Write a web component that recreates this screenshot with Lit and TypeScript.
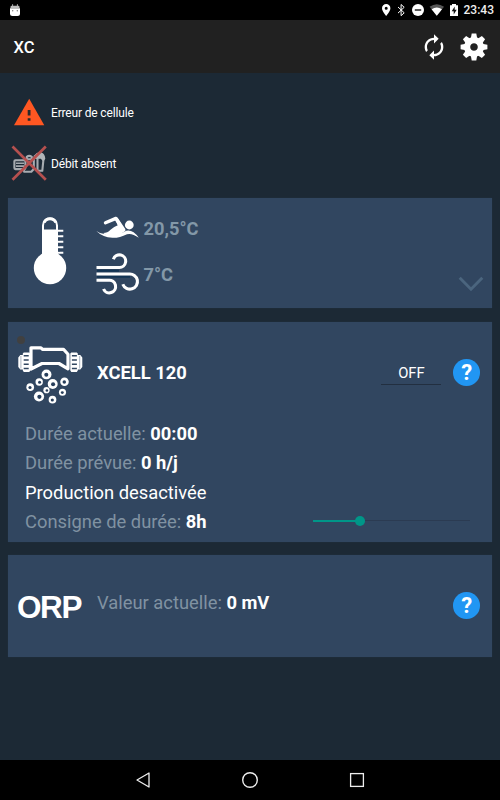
import { LitElement, html, svg, css, TemplateResult } from "lit";
import { customElement, property } from "lit/decorators.js";

const icon = (box: string, body: TemplateResult, cls = "") => {
  const [, , w, h] = box.split(" ");
  return html`<svg class=${cls} viewBox=${box} width=${w} height=${h} aria-hidden="true">${body}</svg>`;
};

const android = icon("9 2 12 14", svg`
  <path d="M12.6 3.2v3M17.4 3.2v3" stroke="#aaa" stroke-width="1"/>
  <path d="M10.5 6q0-1.3 1.3-1.3h6.4q1.3 0 1.3 1.3v1h-9z" fill="#bbb"/>
  <path d="M10 7.2h10v5.3q0 2.5-2.5 2.5h-5q-2.5 0-2.5-2.5z" fill="#fff"/>
  <circle cx="12.7" cy="9.7" r=".7" fill="#777"/><circle cx="17.3" cy="9.7" r=".7" fill="#777"/>`);

const indicators = icon("380 2 80 16", svg`
  <path fill="#fff" fill-rule="evenodd" d="M386.2 4a4.2 4.2 0 0 0-4.2 4.2c0 3 4.2 7.8 4.2 7.8s4.2-4.8 4.2-7.8A4.2 4.2 0 0 0 386.2 4zm0 2.7a1.5 1.5 0 1 1 0 3 1.5 1.5 0 0 1 0-3z"/>
  <path fill="none" stroke="#fff" stroke-width="1" d="M398 7l6.2 5.8-3.1 2.9V4.5l3.1 2.8-6.2 5.8"/>
  <circle cx="418" cy="10" r="6" fill="#fff"/><path d="M414.8 10h6.4" stroke="#222" stroke-width="1.5"/>
  <path fill="#565656" d="M436.8 15.8L429.6 6.8q7.2-5 14.4 0z"/>
  <path fill="#fff" d="M436.8 15.8L431.6 9.2q5.2-3.4 10.4 0z"/>
  <path fill="#fff" d="M450 5.2h2V4h4v1.2h2V16h-8z"/>
  <path fill="#111" d="M454.7 6.6l-3 4.6h2v3.4l3-4.8h-2z"/>`);

const refresh = svg`<path fill="#fff" d="M12 6v3l4-4-4-4v3c-4.42 0-8 3.58-8 8 0 1.57.46 3.03 1.24 4.26L6.7 14.8c-.45-.83-.7-1.79-.7-2.8 0-3.31 2.69-6 6-6zm6.76 1.74L17.3 9.2c.44.84.7 1.79.7 2.8 0 3.31-2.69 6-6 6v-3l-4 4 4 4v-3c4.42 0 8-3.58 8-8 0-1.57-.46-3.03-1.24-4.26z"/>`;

const gear = html`<svg viewBox="-14 -14 28 28" width="28" height="28" aria-hidden="true">
  ${[0, 45, 90, 135, 180, 225, 270, 315].map((a) => svg`<path fill="#fff" transform="rotate(${a})" d="M-3.3 -8L-2.3 -13.4H2.3L3.3 -8z"/>`)}
  <circle r="6.9" fill="none" stroke="#fff" stroke-width="6.2"/></svg>`;

const warning = icon("11 96 36 33", svg`
  <path fill="#ff5722" d="M29.2 98.8L44.3 125.2H14z"/>
  <path stroke="#2a2a2c" stroke-width="2.8" d="M29.1 110v5.6M29.1 118.2v2.6"/>`);

const noFlow = icon("11 145 36 39", svg`
  <g fill="none" stroke="#a6abb0" stroke-width="2.100" stroke-linejoin="round">
    <rect x="14.400" y="161.300" width="11" height="8.800" rx="1"/>
    <path d="M16 164.300h8M16 167.100h8" stroke-width="1.600"/>
    <path d="M25 160.200h8.800v9.800l-2.500 2.800h-7l-1-2.800M26.800 159.500v-1.600q2.400-2 5 0v1.600"/>
    <path d="M33.500 158.500h4v13.300h4.800l1.200-12"/>
  </g>
  <path fill="#b1b5b9" d="M33.500 157l2-1.700q1-1.800 3-1.800h2.800q3.500.8 4 6.200l-2 2.800-2.500-2.800h-5.500z"/>
  <path fill="none" stroke="#b5504f" stroke-width="2.700" d="M12.500 147.500L45.800 180.700M45.800 147.500L12.500 180.700"/>`);

const thermometer = icon("33 215 34 70", svg`
  <path fill="none" stroke="#fff" stroke-width="2" d="M43 232v-6.500a7 7 0 0 1 14 0v6.500"/>
  <path fill="none" stroke="#fff" stroke-width="3" d="M44.200 222.500q1.500-3.800 5.800-3.800t5.800 3.800"/>
  <path fill="#fff" d="M42 229.500h16v27H42z"/>
  <circle cx="50" cy="268" r="16.200" fill="#fff"/>
  <path stroke="#fff" stroke-width="2" d="M57 230.700h6.300M57 236.200h6.300M57 241.700h6.300M57 247.200h6.300M57 252.700h6.300"/>
  <path stroke="#314660" stroke-width="1" d="M59.100 232v3.200M59.100 237.500v3.200M59.100 243v3.200M59.100 248.500v3.200"/>`);

const swimmer = icon("96 213 43 28", svg`
  <circle cx="129.300" cy="225" r="4.400" fill="#fff"/>
  <path fill="none" stroke="#fff" stroke-width="3.400" stroke-linecap="round" stroke-linejoin="round" d="M105.500 222.800l10.400-4.400 3.500 6"/>
  <path fill="#fff" d="M117.500 217.500L125.300 229q.8 2-1.200 2.800-9 5.800-16.600 4.400l-4.200-3.200q4.200 0 7.200-3.200 2.700-2.700 7.300-4.500l-2-5z"/>
  <path fill="#fff" d="M96.300 231q6.200 4.600 13 2.800 3-1.300 8-1.200 6 .4 9-1.800 6.500-1.500 12.500 7-6.800-5-11.800-3.600-7.500 3.800-14.500 3.600-10-.6-16.200-6.800z"/>`);

const wind = icon("96 253 43 42", svg`
  <path fill="none" stroke="#123454" stroke-width="2" d="M97 270.800h22M97 276.800h33"/>
  <g fill="none" stroke="#fff" stroke-width="3.100">
    <path d="M96.500 267.500h22.500a6.300 6.300 0 1 0-5.600-8.300"/>
    <path d="M96.500 274h32.500a7.600 7.600 0 1 1-6.200 10.300"/>
    <path d="M96.500 280.300h12a6.300 6.300 0 1 1-5 8.700"/>
  </g>`);

const bubbles: [number, number, number][] = [
  [46.5, 373.4, 3.5], [39.200, 381, 2.600], [64.500, 380.700, 3], [52.700, 383, 3.500], [30.200, 386.200, 2.700],
  [46.500, 389.200, 2.200], [62.500, 391.300, 2.500], [39, 395.500, 3.600], [52.500, 398.700, 2.700],
];

const collar = svg`
  <path fill="#fff" d="M18.300 356.500l2-2.500h2.500v-1.500l1-1h5.500l1 1v17l-1 1.500h-5.500l-1-1.500v-1h-2.500l-2-2.500z"/>
  <path stroke="#314660" stroke-width="1.500" d="M23.700 354.800h5M23.700 359h5M23.700 363.200h5M23.700 367.400h5"/>
  <path stroke="#8494a6" stroke-width=".7" d="M20.900 355v12.500"/>`;

const cell = icon("16 333 68 72", svg`
  <circle cx="21" cy="339" r="4" fill="#404040"/>
  <path fill="none" stroke="#fff" stroke-width="3.200" stroke-linejoin="round" d="M31 346.800h10l1.500 1.500h21l4.500 5v14.500l-9-5.300H42L31 368z"/>
  ${collar}<g transform="translate(100.600 0) scale(-1 1)">${collar}</g>
  ${bubbles.map(([x, y, r], i) => svg`<circle cx=${x} cy=${y} r=${r + r * 0.42} fill="#fff"/><circle cx=${x + (i % 2 ? 0.4 : -0.2)} cy=${y + 0.3} r=${r * 0.58} fill="#273e5b"/>`)}`);

const chevron = icon("458 275 26 18", svg`<path fill="none" stroke="#4b657e" stroke-width="2.900" d="M459.700 277.800L471 289.200l11.300-11.400"/>`);

@customElement("help-badge")
class HelpBadge extends LitElement {
  static styles = css`
    :host { display: flex; width: 26.6px; height: 26.6px; border-radius: 50%; background: #2196f3;
      align-items: center; justify-content: center; color: #fff; font: 700 22px/26px Roboto, sans-serif; }
    span { margin-top: 1px; }
  `;
  render() { return html`<span>?</span>`; }
}

@customElement("value-line")
class ValueLine extends LitElement {
  @property() label = "";
  @property() value = "";
  static styles = css`
    :host { display: block; color: #8092a2; white-space: nowrap; }
    b { color: #fff; font-weight: 700; }
  `;
  render() { return html`${this.label} <b>${this.value}</b>`; }
}

@customElement("app-root")
class AppRoot extends LitElement {
  static styles = css`
    :host { display: flex; flex-direction: column; width: 500px; height: 800px; overflow: hidden;
      background: #1c2935; color: #fff; font-family: Roboto, "Liberation Sans", sans-serif; }
    svg { display: block; flex: none; overflow: visible; }
    .status { height: 20px; background: #000; display: flex; align-items: center; padding: 0 6px 0 9px; flex: none; }
    .status .clock { font: 500 12px/20px Roboto, sans-serif; color: #eee; margin-left: 4px; }
    .grow { flex: 1; }
    .bar { height: 53px; box-sizing: border-box; background: #212121; display: flex; align-items: center; padding: 0 12.500px 0 13.500px; flex: none; }
    .bar h1 { font: 500 16.500px/20px Roboto, sans-serif; margin: 2px 0 0; flex: 1; }
    .bar .tools { display: flex; align-items: center; gap: 12px; }
    main { flex: 1; padding: 13.500px 8px 0; min-height: 0; }
    .alert { height: 51.5px; display: flex; align-items: center; padding-left: 3px; gap: 4px; font-size: 12px; letter-spacing: -.16px; }
    .alert span { margin-top: 1px; }
    .card { background: #314660; box-shadow: 0 0 1px #263648; box-sizing: border-box; }
    .temps { margin-top: 8.500px; height: 110px; display: flex; padding: 17px 8px 0 25px; }
    .temps .rows { margin: -2px 0 0 29px; flex: 1; display: flex; flex-direction: column; gap: 12px; }
    .temps .row { display: flex; align-items: center; gap: 4.500px; height: 28px; font: 700 18.300px/28px Roboto, sans-serif; color: #8398a8; }
    .temps .row span { margin-top: 3px; }
    .temps .row + .row { height: 42px; }
    .temps .row + .row span { margin-top: 2px; }
    .temps .more { align-self: flex-end; padding-bottom: 15px; }
    .cell { margin-top: 13.500px; height: 220px; padding: 12px 12px 0 8px; }
    .cell .head { display: flex; align-items: center; height: 72px; }
    .cell h2 { font: 700 18.350px/24px Roboto, sans-serif; margin: 7.500px 0 0 13px; flex: 1; }
    .toggle { width: 60px; height: 24px; box-sizing: border-box; border-bottom: 1px solid #222f40; font-size: 14.800px; line-height: 24px; text-align: center; margin: 7px 12px 0 0; }
    .cell help-badge { margin-top: 6px; }
    .lines { padding: 13px 10px 0 9px; font-size: 18.350px; line-height: 29.600px; }
    .last { display: flex; align-items: center; justify-content: space-between; }
    .slider { width: 157px; height: 10px; display: flex; align-items: center; margin-top: -3px; }
    .slider .on { height: 2px; width: 43px; background: #009688; }
    .slider .knob { width: 10px; height: 10px; border-radius: 50%; background: #009688; margin-left: -1px; }
    .slider .off { height: 1.500px; flex: 1; background: #2b3b52; }
    .orp { margin-top: 13.500px; height: 101.500px; padding: 0 12px 0 9px; display: flex; align-items: center; font-size: 18.350px; }
    .orp strong { font: 700 31.500px/36px "Liberation Sans", sans-serif; letter-spacing: -1.400px; width: 80px; margin-top: 2px; }
    .orp value-line { flex: 1; margin-top: -7px; }
    nav { height: 40px; background: #000; flex: none; display: flex; justify-content: center; align-items: center; gap: 90px; }
  `;

  render() {
    return html`
      <div class="status">${android}<span class="grow"></span>${indicators}<span class="clock">23:43</span></div>
      <header class="bar">
        <h1>XC</h1>
        <div class="tools">
          <svg viewBox="0 0 24 24" width="28" height="28" aria-hidden="true">${refresh}</svg>
          ${gear}
        </div>
      </header>
      <main>
        <div class="alert">${warning}<span>Erreur de cellule</span></div>
        <div class="alert">${noFlow}<span>Débit absent</span></div>
        <section class="card temps">
          ${thermometer}
          <div class="rows">
            <div class="row">${swimmer}<span>20,5°C</span></div>
            <div class="row">${wind}<span>7°C</span></div>
          </div>
          <div class="more">${chevron}</div>
        </section>
        <section class="card cell">
          <div class="head">${cell}<h2>XCELL 120</h2><div class="toggle">OFF</div><help-badge></help-badge></div>
          <div class="lines">
            <value-line label="Durée actuelle:" value="00:00"></value-line>
            <value-line label="Durée prévue:" value="0 h/j"></value-line>
            <div>Production desactivée</div>
            <div class="last">
              <value-line label="Consigne de durée:" value="8h"></value-line>
              <div class="slider"><span class="on"></span><span class="knob"></span><span class="off"></span></div>
            </div>
          </div>
        </section>
        <section class="card orp">
          <strong>ORP</strong>
          <value-line label="Valeur actuelle:" value="0 mV"></value-line>
          <help-badge></help-badge>
        </section>
      </main>
      <nav>
        ${icon("135 771 16 18", svg`<path fill="none" stroke="#eee" stroke-width="1.300" stroke-linejoin="round" d="M149 773v14l-12-7z"/>`)}
        ${icon("241 771 18 18", svg`<circle cx="250" cy="780" r="7.300" fill="none" stroke="#eee" stroke-width="1.400"/>`)}
        ${icon("349 771 16 18", svg`<rect x="350.600" y="773.600" width="12.800" height="12.800" fill="none" stroke="#eee" stroke-width="1.300"/>`)}
      </nav>`;
  }
}
